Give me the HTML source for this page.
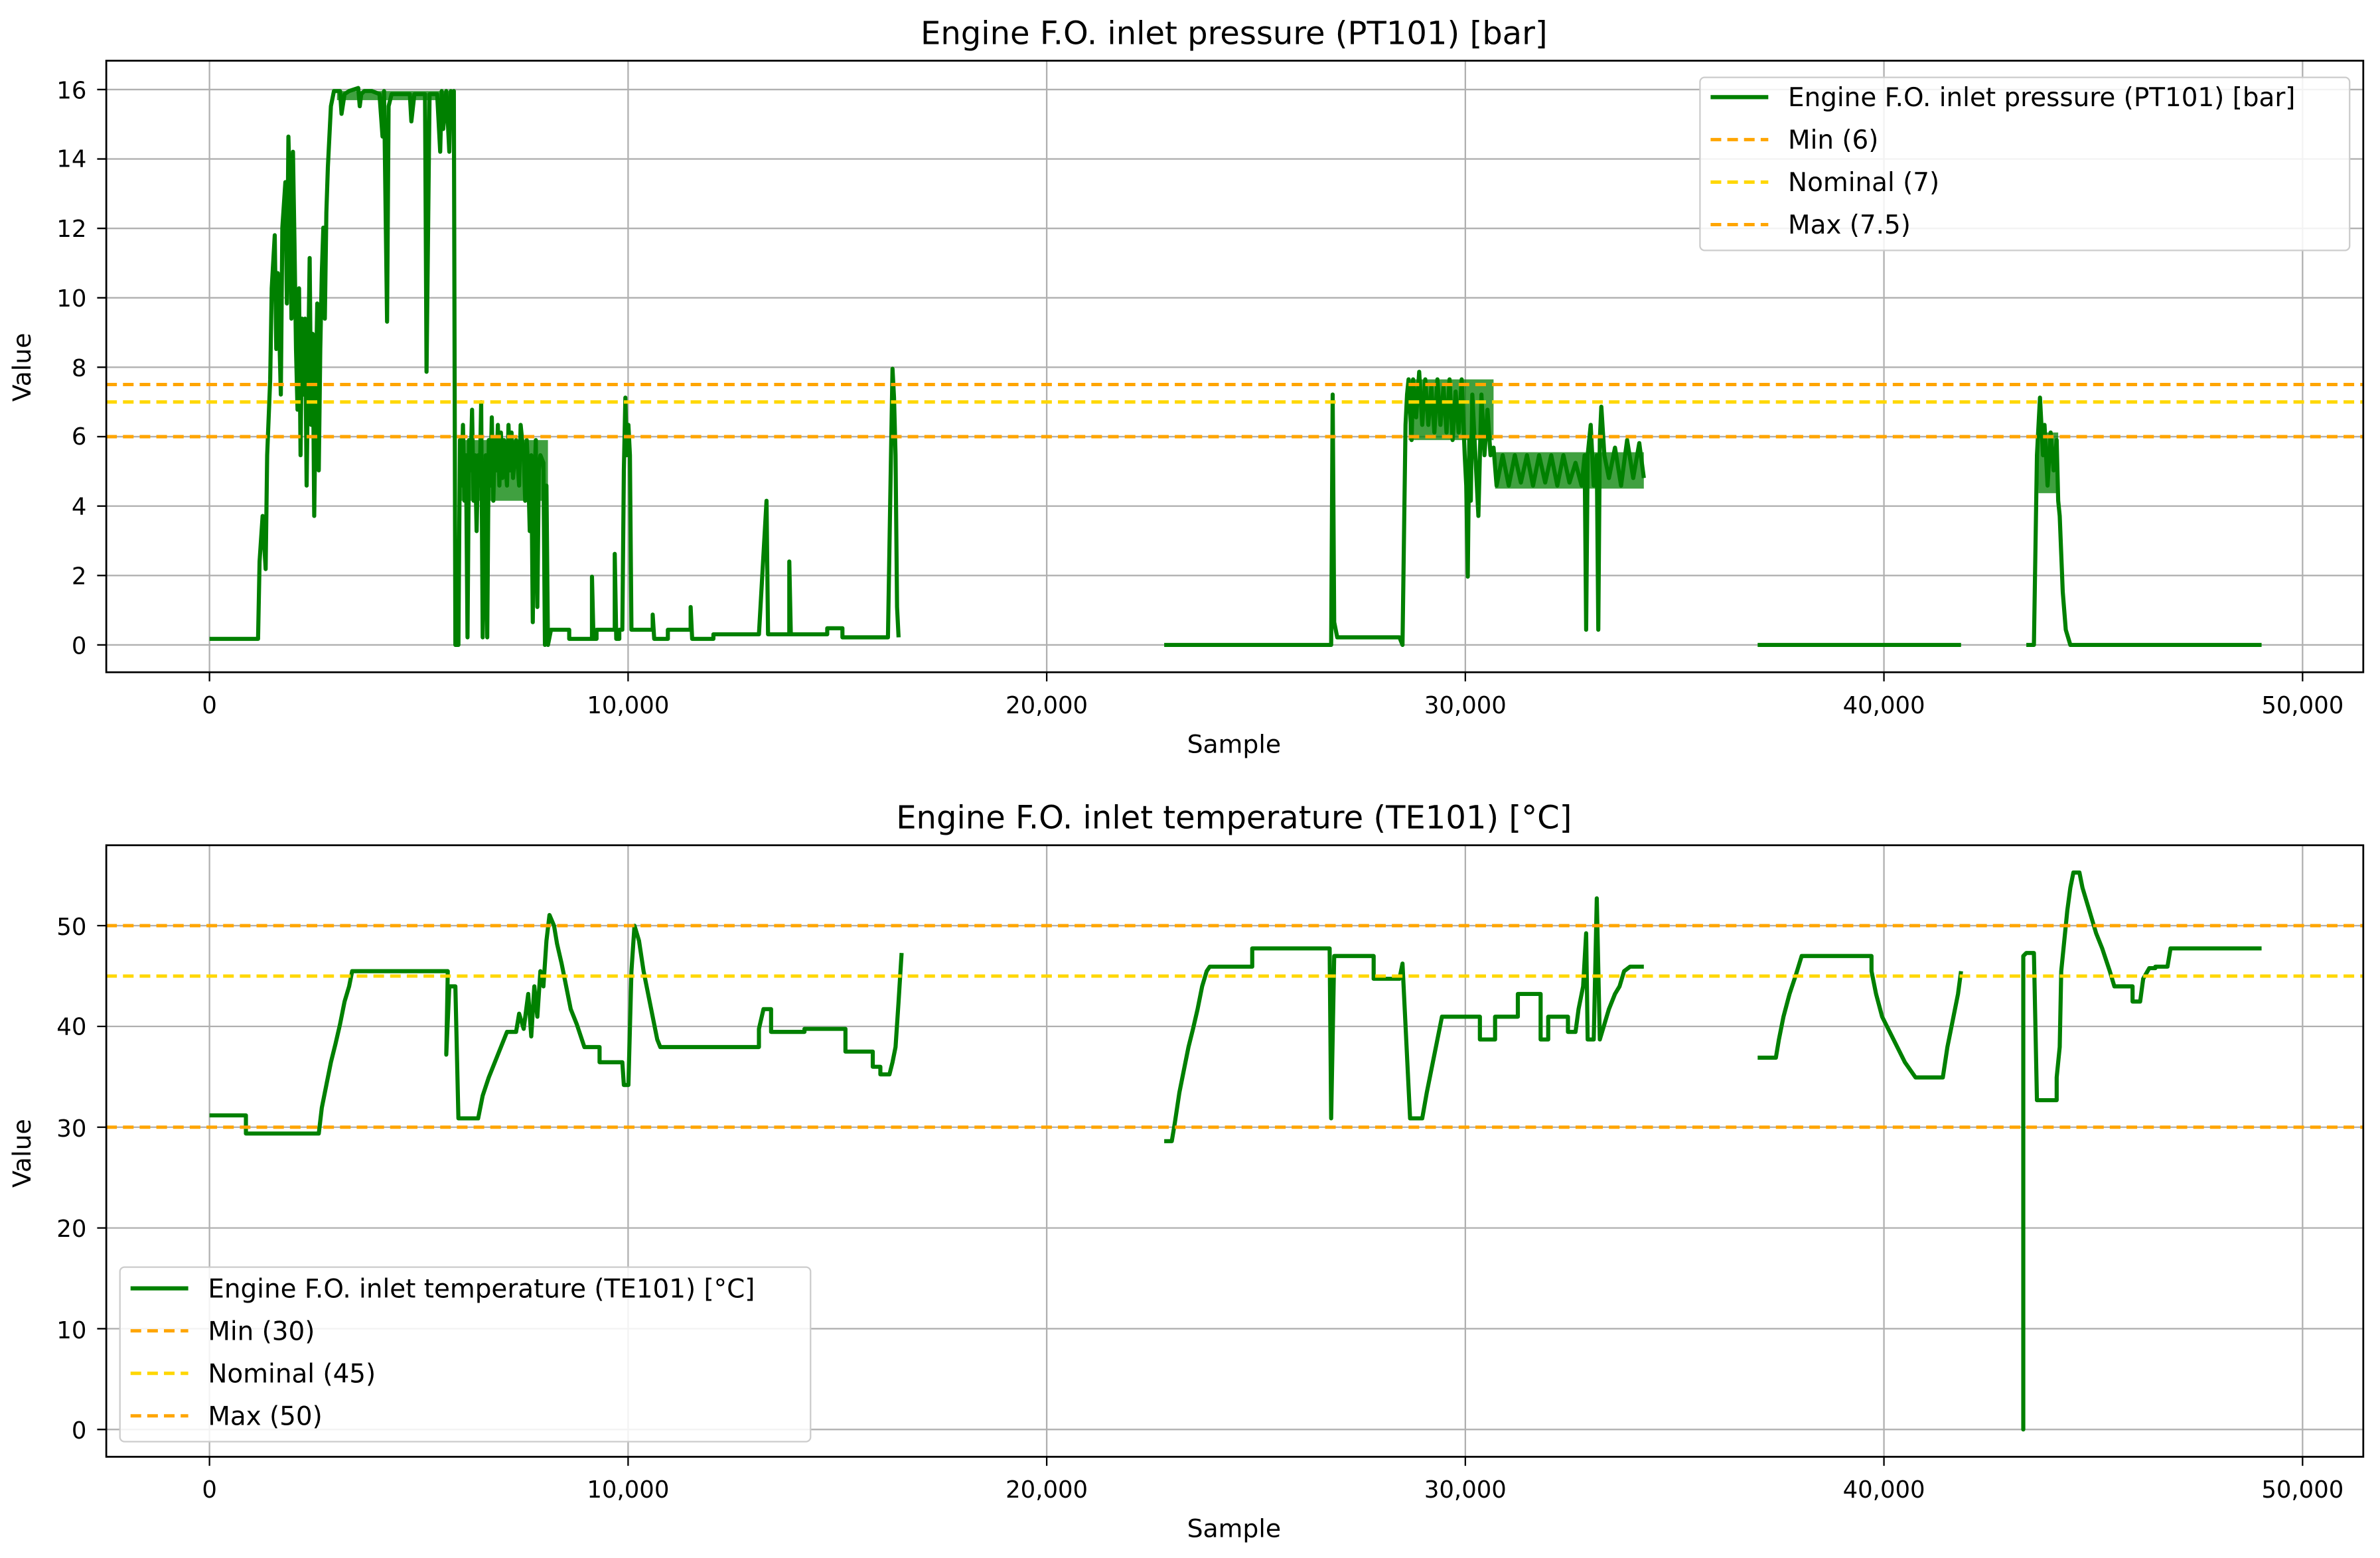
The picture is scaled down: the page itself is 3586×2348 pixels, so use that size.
<!DOCTYPE html>
<html><head><meta charset="utf-8"><style>
html,body{margin:0;padding:0;background:#fff}
svg{display:block}
text{font-family:"DejaVu Sans","Liberation Sans",sans-serif;fill:#000}
</style></head><body>
<svg width="3586" height="2348" viewBox="0 0 1568 1026.7" xmlns="http://www.w3.org/2000/svg">
<rect width="1568" height="1027" fill="#fff"/>
<!-- ============ TOP PLOT ============ -->
<g stroke="#b0b0b0" stroke-width="1" fill="none">
<path d="M138 40V443M413.8 40V443M689.6 40V443M965.4 40V443M1241.2 40V443M1517 40V443"/>
<path d="M70 425H1557M70 379.25H1557M70 333.5H1557M70 287.75H1557M70 242H1557M70 196.25H1557M70 150.5H1557M70 104.75H1557M70 59H1557"/>
</g>
<g font-size="15.5" text-anchor="end">
<text x="57" y="431">0</text><text x="57" y="385">2</text><text x="57" y="339">4</text><text x="57" y="293">6</text><text x="57" y="248">8</text><text x="57" y="202">10</text><text x="57" y="156">12</text><text x="57" y="110">14</text><text x="57" y="65">16</text>
</g>
<g stroke="#000" stroke-width="1"><path d="M64 425H70M64 379.25H70M64 333.5H70M64 287.75H70M64 242H70M64 196.25H70M64 150.5H70M64 104.75H70M64 59H70"/>
<path d="M138 443V449M413.8 443V449M689.6 443V449M965.4 443V449M1241.2 443V449M1517 443V449"/></g>
<g font-size="15.5" text-anchor="middle">
<text x="138" y="470">0</text><text x="413.8" y="470">10,000</text><text x="689.6" y="470">20,000</text><text x="965.4" y="470">30,000</text><text x="1241.2" y="470">40,000</text><text x="1517" y="470">50,000</text>
<text x="813" y="496" font-size="16.5">Sample</text>
<text x="813" y="29" font-size="21">Engine F.O. inlet pressure (PT101) [bar]</text>
</g>
<text font-size="16.5" text-anchor="middle" transform="translate(20 242) rotate(-90)">Value</text>
<g fill="#008000" fill-opacity="0.75">
<rect x="222" y="60" width="76" height="6"/>
<rect x="303" y="290" width="58" height="40"/>
<rect x="928" y="250" width="56" height="40"/>
<rect x="985" y="298" width="98" height="24"/>
<rect x="1343" y="285" width="13" height="40"/>
</g>
<g fill="none" stroke="#008000" stroke-width="2.7" stroke-linejoin="round">
<path d="M138 421H170L171 370L173 340L175 375L176 300L178 250L179 190L181 155L182 230L183 180L185 260L186 150L188 120L189 200L190 90L191 130L192 210L193 100L194 160L195 230L196 270L197 190L198 300L199 210L200 260L201 210L202 320L203 240L204 170L205 280L206 220L207 340L208 260L209 200L210 310L211 230L212 180L213 150L214 210L215 140L216 110L217 90L218 70L220 60L224 60L225 75L227 62L230 60L236 58L237 70L238 62L240 60L245 60L250 62L252 90L253 60L255 212L256 70L258 62L265 62L270 62L271 80L273 62L280 62L281 245L283 62L288 62L290 100L291 60L292 85L294 60L296 100L297 60L298 80L299 60L300 425L302 425L303 290L304 320L305 280L306 330L307 300L308 420L309 290L310 310L311 270L312 330L313 300L314 350L315 300L316 320L317 265L318 420L320 300L321 420L322 290L323 320L324 275L325 330L326 290L327 310L328 280L329 320L330 285L331 315L332 290L334 320L335 280L336 310L337 285L338 315L340 290L342 320L343 280L345 300L346 330L347 290L348 310L349 350L350 300L351 410L352 320L353 290L354 400L355 310L356 300L358 305L359 425L360 320L361 425L363 415H375V421H390V380L391 421H393V415H405V365L406 421H408V415H410L411 310L412 262L413 300L414 280L415 300L416 415H430V405L431 421H440V415H455V400L456 421H470V418H500V418L505 330L506 418H520V370L521 418H545V414H555V420H585L587 300L588 243L589 262L590 300L591 400L592 420"/>
<path d="M767 425H877L878 260L879 410L881 420H922L924 425L926 280L927 260L928 250L930 290L931 250L933 275L935 245L937 280L939 250L941 280L943 255L945 285L947 250L949 280L951 255L953 285L955 250L957 290L959 258L961 285L963 250L965 300L966 320L967 380L968 290L969 330L970 260L972 300L974 340L976 260L978 300L980 270L982 300L984 295L986 320L990 300L994 320L998 300L1002 318L1006 300L1010 320L1014 300L1018 318L1022 300L1026 320L1030 300L1034 318L1038 305L1042 320L1044 300L1045 415L1046 300L1048 280L1050 320L1052 300L1053 415L1054 290L1055 268L1057 300L1060 315L1064 295L1068 320L1072 290L1076 315L1080 292L1083 315"/>
<path d="M1158 425H1292M1335 425H1340L1342 300L1344 262L1346 300L1347 280L1349 320L1351 285L1353 310L1355 290L1356 330L1357 340L1359 390L1361 415L1364 425H1490"/>
</g>
<g fill="none" stroke-width="2.2" stroke-dasharray="7 4">
<path d="M70 287.75H1557" stroke="#FFA500"/>
<path d="M70 264.9H1557" stroke="#FFD700"/>
<path d="M70 253.4H1557" stroke="#FFA500"/>
</g>
<rect x="70" y="40" width="1487" height="403" fill="none" stroke="#000" stroke-width="1.2"/>
<!-- top legend -->
<rect x="1120" y="51" width="428" height="114" rx="3" fill="#fff" fill-opacity="0.85" stroke="#ccc" stroke-width="1"/>
<path d="M1127 64H1165" stroke="#008000" stroke-width="2.7"/>
<path d="M1127 92H1165" stroke="#FFA500" stroke-width="2.2" stroke-dasharray="7 4"/>
<path d="M1127 120H1165" stroke="#FFD700" stroke-width="2.2" stroke-dasharray="7 4"/>
<path d="M1127 148H1165" stroke="#FFA500" stroke-width="2.2" stroke-dasharray="7 4"/>
<g font-size="17">
<text x="1178" y="70">Engine F.O. inlet pressure (PT101) [bar]</text>
<text x="1178" y="98">Min (6)</text><text x="1178" y="126">Nominal (7)</text><text x="1178" y="154">Max (7.5)</text>
</g>
<!-- ============ BOTTOM PLOT ============ -->
<g stroke="#b0b0b0" stroke-width="1" fill="none">
<path d="M138 557V960M413.8 557V960M689.6 557V960M965.4 557V960M1241.2 557V960M1517 557V960"/>
<path d="M70 942H1557M70 875.6H1557M70 809.2H1557M70 742.8H1557M70 676.4H1557M70 610H1557"/>
</g>
<g font-size="15.5" text-anchor="end">
<text x="57" y="948">0</text><text x="57" y="882">10</text><text x="57" y="815">20</text><text x="57" y="749">30</text><text x="57" y="682">40</text><text x="57" y="616">50</text>
</g>
<g stroke="#000" stroke-width="1"><path d="M64 942H70M64 875.6H70M64 809.2H70M64 742.8H70M64 676.4H70M64 610H70"/>
<path d="M138 960V966M413.8 960V966M689.6 960V966M965.4 960V966M1241.2 960V966M1517 960V966"/></g>
<g font-size="15.5" text-anchor="middle">
<text x="138" y="987">0</text><text x="413.8" y="987">10,000</text><text x="689.6" y="987">20,000</text><text x="965.4" y="987">30,000</text><text x="1241.2" y="987">40,000</text><text x="1517" y="987">50,000</text>
<text x="813" y="1013" font-size="16.5">Sample</text>
<text x="813" y="546" font-size="21">Engine F.O. inlet temperature (TE101) [°C]</text>
</g>
<text font-size="16.5" text-anchor="middle" transform="translate(20 760) rotate(-90)">Value</text>
<g fill="none" stroke="#008000" stroke-width="2.7" stroke-linejoin="round">
<path d="M138 735H162V747H210L212 730L215 715L218 700L221 688L224 675L227 660L230 650L232 640H295L294 695L296 650H300L302 737H315L318 722L322 710L326 700L330 690L334 680H340L342 668L345 678L348 655L350 683L352 650L354 670L356 640L358 650L360 620L362 603L365 610L367 622L370 635L373 650L376 665L380 675L385 690H395V700H410L411 715H414L416 640L418 610L421 620L424 640L427 655L430 670L433 685L435 690H500V678L503 665H508V680H530V678H557V693H575V703H580V708H586L588 700L590 690L592 660L594 628"/>
<path d="M767 752H772L774 740L777 720L780 705L783 690L786 678L789 665L792 650L795 640L797 637H825V625H876L877 737L879 630H905V645H922L924 635L929 737H937L940 720L943 705L946 690L950 670H975V685H985V670H1000V655H1015V685H1020V670H1033V680H1038L1040 665L1043 650L1045 615L1046 685H1050L1052 592L1054 685L1057 675L1060 665L1064 655L1067 650L1070 640L1074 637H1083"/>
<path d="M1158 697H1170L1172 685L1175 670L1179 655L1183 643L1187 630H1233V640L1236 655L1240 670L1245 680L1250 690L1255 700L1262 710H1280L1283 690L1287 670L1290 655L1292 640"/>
<path d="M1333 642V942V630L1335 628H1340L1342 725H1355V710L1357 690L1358 640L1360 620L1362 600L1364 585L1366 575H1370L1372 585L1375 595L1378 605L1381 615L1385 625L1390 640L1393 650H1405V660H1410L1412 645L1416 638H1420V637H1428L1430 625H1490"/>
</g>
<g fill="none" stroke-width="2.2" stroke-dasharray="7 4">
<path d="M70 742.8H1557" stroke="#FFA500"/>
<path d="M70 643.2H1557" stroke="#FFD700"/>
<path d="M70 610H1557" stroke="#FFA500"/>
</g>
<rect x="70" y="557" width="1487" height="403" fill="none" stroke="#000" stroke-width="1.2"/>
<!-- bottom legend -->
<rect x="79" y="835" width="455" height="115" rx="3" fill="#fff" fill-opacity="0.85" stroke="#ccc" stroke-width="1"/>
<path d="M86 849H124" stroke="#008000" stroke-width="2.7"/>
<path d="M86 877H124" stroke="#FFA500" stroke-width="2.2" stroke-dasharray="7 4"/>
<path d="M86 905H124" stroke="#FFD700" stroke-width="2.2" stroke-dasharray="7 4"/>
<path d="M86 933H124" stroke="#FFA500" stroke-width="2.2" stroke-dasharray="7 4"/>
<g font-size="17">
<text x="137" y="855">Engine F.O. inlet temperature (TE101) [°C]</text>
<text x="137" y="883">Min (30)</text><text x="137" y="911">Nominal (45)</text><text x="137" y="939">Max (50)</text>
</g>
</svg>
</body></html>
